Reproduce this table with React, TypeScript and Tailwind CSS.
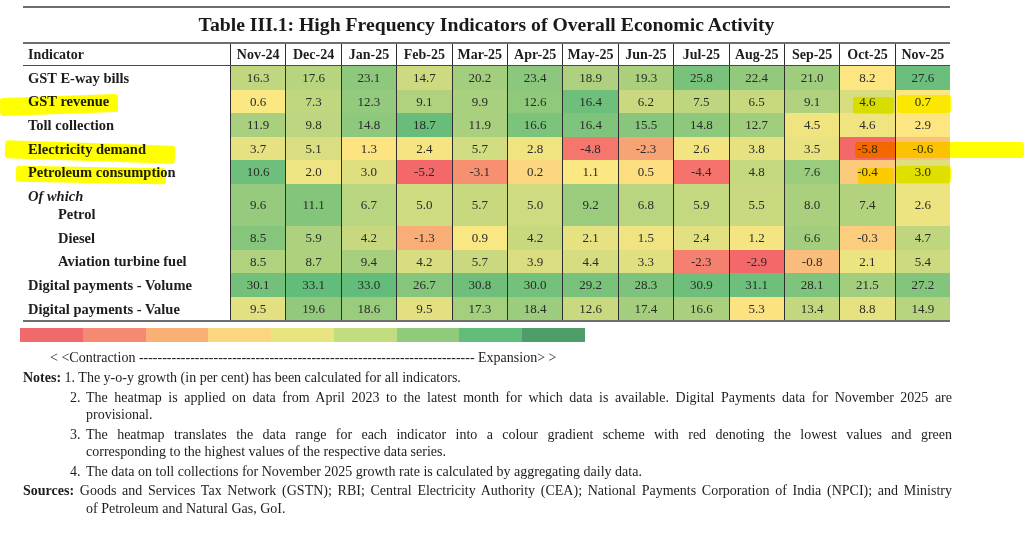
import React from 'react'

const months = ['Nov-24', 'Dec-24', 'Jan-25', 'Feb-25', 'Mar-25', 'Apr-25', 'May-25', 'Jun-25', 'Jul-25', 'Aug-25', 'Sep-25', 'Oct-25', 'Nov-25']

type Row = {
  label: string
  values: number[]
  scale: [number, number, number]
  indent?: boolean
  group?: string
}

const rows: Row[] = [
  { label: 'GST E-way bills', values: [16.3, 17.6, 23.1, 14.7, 20.2, 23.4, 18.9, 19.3, 25.8, 22.4, 21.0, 8.2, 27.6], scale: [-5, 8.5, 29] },
  { label: 'GST revenue', values: [0.6, 7.3, 12.3, 9.1, 9.9, 12.6, 16.4, 6.2, 7.5, 6.5, 9.1, 4.6, 0.7], scale: [-5, 0.5, 18] },
  { label: 'Toll collection', values: [11.9, 9.8, 14.8, 18.7, 11.9, 16.6, 16.4, 15.5, 14.8, 12.7, 4.5, 4.6, 2.9], scale: [-10, 3.2, 19.5] },
  { label: 'Electricity demand', values: [3.7, 5.1, 1.3, 2.4, 5.7, 2.8, -4.8, -2.3, 2.6, 3.8, 3.5, -5.8, -0.6], scale: [-5.6, 1.5, 17] },
  { label: 'Petroleum consumption', values: [10.6, 2.0, 3.0, -5.2, -3.1, 0.2, 1.1, 0.5, -4.4, 4.8, 7.6, -0.4, 3.0], scale: [-4.9, 1.0, 11.5] },
  { label: 'Petrol', group: 'Of which', indent: true, values: [9.6, 11.1, 6.7, 5.0, 5.7, 5.0, 9.2, 6.8, 5.9, 5.5, 8.0, 7.4, 2.6], scale: [-5, 1.3, 14] },
  { label: 'Diesel', indent: true, values: [8.5, 5.9, 4.2, -1.3, 0.9, 4.2, 2.1, 1.5, 2.4, 1.2, 6.6, -0.3, 4.7], scale: [-3.6, 0.6, 11] },
  { label: 'Aviation turbine fuel', indent: true, values: [8.5, 8.7, 9.4, 4.2, 5.7, 3.9, 4.4, 3.3, -2.3, -2.9, -0.8, 2.1, 5.4], scale: [-2.9, 0.3, 17] },
  { label: 'Digital payments - Volume', values: [30.1, 33.1, 33.0, 26.7, 30.8, 30.0, 29.2, 28.3, 30.9, 31.1, 28.1, 21.5, 27.2], scale: [-5, 5, 33.5] },
  { label: 'Digital payments - Value', values: [9.5, 19.6, 18.6, 9.5, 17.3, 18.4, 12.6, 17.4, 16.6, 5.3, 13.4, 8.8, 14.9], scale: [-10, 6, 26] },
]

const legend = ['#f06a6c', '#f58a72', '#f9b074', '#fcd57f', '#e8e47f', '#c2dc80', '#90ca7c', '#62bd7b', '#4f9d69']

const RED = [244, 104, 106]
const YELLOW = [253, 232, 130]
const GREEN = [96, 187, 122]

function clamp(t: number) {
  return Math.max(0, Math.min(1, t))
}

// excel style 3-colour scale: red -> yellow -> green
function heat(v: number, [lo, mid, hi]: [number, number, number]) {
  let a = RED
  let b = YELLOW
  let t = 0
  if (v <= mid) {
    t = clamp((v - lo) / (mid - lo))
  } else {
    a = YELLOW
    b = GREEN
    t = clamp((v - mid) / (hi - mid))
  }
  const c = a.map((x, i) => Math.round(x + (b[i] - x) * t))
  return `rgb(${c[0]}, ${c[1]}, ${c[2]})`
}

function Highlight({ className }: { className: string }) {
  return <div className={`pointer-events-none absolute rounded-[3px] bg-[#ffff00] mix-blend-multiply ${className}`} />
}

function DataRow({ row }: { row: Row }) {
  const tall = !!row.group
  return (
    <div className={`flex ${tall ? 'h-[42px]' : 'h-[23.6px]'}`}>
      <div className="flex w-[207px] flex-col justify-center text-[14.5px] font-bold leading-[18px] text-[#1d1d1d]">
        {row.group && <div className="pl-[5px] italic">{row.group}</div>}
        <div className={row.indent ? 'pl-[35px]' : 'pl-[5px]'}>{row.label}</div>
      </div>
      {row.values.map((v, i) => (
        <div
          key={i}
          className="flex flex-1 items-center justify-center border-l border-[#2e2e2e] text-[13px] text-[#2a2a2a]"
          style={{ backgroundColor: heat(v, row.scale) }}
        >
          {v.toFixed(1)}
        </div>
      ))}
    </div>
  )
}

// first line of a note, stretched to the right margin like the printed page
function Full({ children }: { children: React.ReactNode }) {
  return <div className="text-justify [text-align-last:justify]">{children}</div>
}

export default function App() {
  return (
    <div className="relative h-[534px] w-[1024px] overflow-hidden bg-white font-['Liberation_Serif','Times_New_Roman',serif] text-[#1d1d1d]">
      <div className="ml-[23px] w-[927px]">
        <div className="mt-[6px] h-[2px] bg-[#6e6e6e]" />
        <div className="flex h-[34px] items-center justify-center text-[19.7px] font-bold text-[#1a1a1a]">
          Table III.1: High Frequency Indicators of Overall Economic Activity
        </div>
        <div className="h-[2px] bg-[#6e6e6e]" />

        <div className="flex h-[22px] border-b-[1.5px] border-[#4a4a4a] text-[14px] font-bold">
          <div className="flex w-[207px] items-center pl-[5px]">Indicator</div>
          {months.map(m => (
            <div key={m} className="flex flex-1 items-center justify-center border-l border-[#2e2e2e]">
              {m}
            </div>
          ))}
        </div>

        {rows.map(r => (
          <DataRow key={r.label} row={r} />
        ))}
        <div className="h-[2px] bg-[#6e6e6e]" />

        <div className="ml-[-3px] mt-[6px] flex h-[14px] w-[565px]">
          {legend.map(c => (
            <div key={c} className="flex-1" style={{ backgroundColor: c }} />
          ))}
        </div>

        <div className="mt-[7px] pl-[27px] text-[14px] leading-[18px] whitespace-nowrap">
          &lt; &lt;Contraction ------------------------------------------------------------------------ Expansion&gt; &gt;
        </div>

        <div className="mt-[2px] w-[929px] text-[14px] leading-[17.5px] text-[#1d1d1d]">
          <p>
            <b>Notes:</b> 1. The y-o-y growth (in per cent) has been calculated for all indicators.
          </p>
          <div className="mt-[2px] flex pl-[47px]">
            <span className="w-[16px] shrink-0">2.</span>
            <div className="flex-1">
              <Full>The heatmap is applied on data from April 2023 to the latest month for which data is available. Digital Payments data for November 2025 are</Full>
              <div>provisional.</div>
            </div>
          </div>
          <div className="mt-[2px] flex pl-[47px]">
            <span className="w-[16px] shrink-0">3.</span>
            <div className="flex-1">
              <Full>The heatmap translates the data range for each indicator into a colour gradient scheme with red denoting the lowest values and green</Full>
              <div>corresponding to the highest values of the respective data series.</div>
            </div>
          </div>
          <div className="mt-[2px] flex pl-[47px]">
            <span className="w-[16px] shrink-0">4.</span>
            <p>The data on toll collections for November 2025 growth rate is calculated by aggregating daily data.</p>
          </div>
          <div className="mt-[2px]">
            <Full>
              <b>Sources:</b> Goods and Services Tax Network (GSTN); RBI; Central Electricity Authority (CEA); National Payments Corporation of India (NPCI); and Ministry
            </Full>
            <div className="pl-[63px]">of Petroleum and Natural Gas, GoI.</div>
          </div>
        </div>
      </div>

      {/* hand drawn marker strokes */}
      <Highlight className="left-0 top-[96px] h-[18px] w-[118px] -rotate-2" />
      <Highlight className="left-[5px] top-[143px] h-[18px] w-[170px] rotate-2" />
      <Highlight className="left-[16px] top-[167px] h-[16px] w-[150px] rotate-1" />
      <Highlight className="left-[853px] top-[97px] h-[17px] w-[41px] rotate-1" />
      <Highlight className="left-[897px] top-[95px] h-[18px] w-[54px]" />
      <Highlight className="left-[855px] top-[142px] h-[16px] w-[169px]" />
      <Highlight className="left-[858px] top-[168px] h-[16px] w-[36px]" />
      <Highlight className="left-[896px] top-[166px] h-[17px] w-[55px]" />
    </div>
  )
}
